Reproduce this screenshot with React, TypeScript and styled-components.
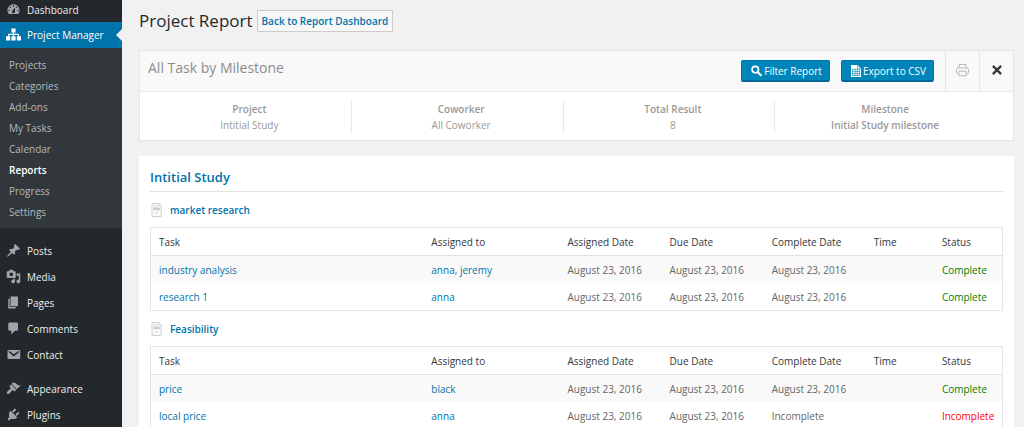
import React from "react";
import styled, { createGlobalStyle } from "styled-components";

const GlobalStyle = createGlobalStyle`
  *, *::before, *::after { box-sizing: border-box; }
  html { scrollbar-width: none; }
  body {
    margin: 0;
    background: #f1f1f1;
    color: #444;
    font: 10px/16px "Open Sans", "Noto Sans", sans-serif;
  }
  a { color: #0073aa; text-decoration: none; }
  h1, h2, h3, p, ul, dl, dd { margin: 0; padding: 0; }
  ul { list-style: none; }
  button { font: inherit; margin: 0; cursor: pointer; }
`;

const Page = styled.div`
  display: flex;
  min-height: 100vh;
`;

const Sidebar = styled.nav`
  flex: none;
  width: 122px;
  background: #23282d;
`;

const MenuLink = styled.a<{ $active?: boolean; $first?: boolean }>`
  display: flex;
  align-items: center;
  gap: 6px;
  height: ${(p) => (p.$first ? 22 : 26)}px;
  padding: 0 0 ${(p) => (p.$first ? 2 : 0)}px 6px;
  position: relative;
  color: ${(p) => (p.$active ? "#fff" : "#eee")};
  background: ${(p) => (p.$active ? "#0073aa" : "transparent")};

  svg {
    flex: none;
    margin-bottom: 2px;
    fill: ${(p) => (p.$active ? "#fff" : "#a0a5aa")};
  }

  &::after {
    content: "";
    display: ${(p) => (p.$active ? "block" : "none")};
    position: absolute;
    right: 0;
    top: 7px;
    border: 6px solid transparent;
    border-left-width: 0;
    border-right-color: #f1f1f1;
  }
`;

const MenuGroup = styled.ul<{ $top?: number }>`
  padding-top: ${(p) => p.$top ?? 0}px;
`;

const SubMenu = styled.ul`
  padding: 7px 0 5px;
  background: #32373c;
`;

const SubLink = styled.a<{ $current?: boolean }>`
  display: block;
  padding-left: 9px;
  line-height: 21px;
  color: ${(p) => (p.$current ? "#fff" : "#b4b9be")};
  font-weight: ${(p) => (p.$current ? 600 : 400)};
`;

const Main = styled.main`
  flex: 1;
  min-width: 0;
  padding: 10px 10px 0 17px;
`;

const TitleRow = styled.header`
  display: flex;
  align-items: center;
  gap: 4px;
  height: 22px;
  margin-bottom: 18px;
`;

const Title = styled.h1`
  font-size: 17px;
  font-weight: 400;
  line-height: 22px;
  color: #23282d;
`;

const BackButton = styled.button`
  height: 22px;
  padding: 0 4px;
  border: 1px solid #ccc;
  background: #f7f7f7;
  color: #0073aa;
  font-weight: 600;
`;

const Summary = styled.section`
  margin-bottom: 15px;
  border: 1px solid #e5e5e5;
  background: #fff;
`;

const SummaryHead = styled.div`
  display: flex;
  align-items: center;
  height: 41px;
  border-bottom: 1px solid #eaeaea;
  background: #f9f9f9;
`;

const SummaryTitle = styled.h2`
  flex: 1;
  padding: 0 0 6px 8px;
  font-size: 14px;
  font-weight: 400;
  line-height: 20px;
  color: #8c8c8c;
`;

const PrimaryButton = styled.button`
  display: flex;
  align-items: center;
  justify-content: center;
  gap: 2px;
  height: 22px;
  margin-right: 11px;
  padding: 0 7px 0 9px;
  border: 1px solid #0073aa;
  border-bottom: 2px solid #006799;
  border-radius: 2px;
  background: #0085ba;
  color: #fff;
`;

const IconButton = styled.button`
  display: flex;
  align-items: center;
  justify-content: center;
  align-self: stretch;
  width: 34px;
  padding: 0 0 2px;
  border: 0;
  border-left: 1px solid #e5e5e5;
  background: transparent;
`;

const Stats = styled.dl`
  display: grid;
  grid-template-columns: repeat(4, 1fr);
  column-gap: 8px;
  padding: 9px 26px 7px 8px;
  text-align: center;
  color: #999;
`;

const Stat = styled.div<{ $strong?: boolean }>`
  border-right: 1px solid #e8e8e8;
  &:last-child { border-right: 0; }

  dt { font-weight: 600; }
  dd { font-weight: ${(p) => (p.$strong ? 600 : 400)}; }
`;

const Card = styled.section`
  padding: 11px;
  background: #fff;
`;

const ProjectName = styled.h2`
  padding-bottom: 4px;
  border-bottom: 1px solid #e1e1e1;
  font-size: 13px;
  font-weight: 600;
  line-height: 20px;
  color: #0073aa;
`;

const ListTitle = styled.h3`
  display: flex;
  align-items: center;
  gap: 8px;
  height: 35px;
  padding-left: 1px;
  font-size: 10px;
  font-weight: 600;
`;

const TaskTable = styled.table`
  width: 100%;
  table-layout: fixed;
  border: 1px solid #e5e5e5;
  border-spacing: 0;

  th, td {
    height: 27px;
    padding: 0 0 0 8px;
    text-align: left;
    font-weight: 400;
    white-space: nowrap;
  }
  th {
    height: 28px;
    border-bottom: 1px solid #e1e1e1;
    color: #32373c;
  }
  td { color: #666; }
  tbody tr:nth-child(odd) { background: #f9f9f9; }
`;

const Col = styled.col<{ $width: number }>`
  width: ${(p) => p.$width}%;
`;

const Status = styled.td<{ $done: boolean }>`
  && { color: ${(p) => (p.$done ? "#008000" : "#f00")}; }
`;

const icons = {
  dashboard:
    "M3.76 16h12.48c1.1-1.37 1.76-3.11 1.76-5 0-4.42-3.58-8-8-8s-8 3.58-8 8c0 1.89.66 3.63 1.76 5zM10 4c.55 0 1 .45 1 1s-.45 1-1 1-1-.45-1-1 .45-1 1-1zM6 6c.55 0 1 .45 1 1s-.45 1-1 1-1-.45-1-1 .45-1 1-1zm8 0c.55 0 1 .45 1 1s-.45 1-1 1-1-.45-1-1 .45-1 1-1zm-5.37 5.55L12 7v6c0 1.1-.9 2-2 2s-2-.9-2-2c0-.57.24-1.08.63-1.45zM4 10c.55 0 1 .45 1 1s-.45 1-1 1-1-.45-1-1 .45-1 1-1zm12 0c.55 0 1 .45 1 1s-.45 1-1 1-1-.45-1-1 .45-1 1-1z",
  sitemap:
    "M7.2 2h5.6v5.4h-2v1.7h6.6v3.3H20V18h-5.6v-5.6h1.4v-1.8h-5v1.8h2V18H7.2v-5.6h2v-1.8h-5v1.8h1.4V18H0v-5.6h2.6V9.1h6.6V7.4h-2z",
  posts:
    "M10.44 3.02l1.82-1.82 6.36 6.35-1.83 1.82c-1.05-.68-2.48-.57-3.41.36l-.75.75c-.92.93-1.04 2.35-.35 3.41l-1.83 1.82-2.41-2.41-2.8 2.79c-.42.42-3.38 2.71-3.8 2.29s1.86-3.39 2.28-3.81l2.79-2.79L4.1 9.36l1.83-1.82c1.05.69 2.48.57 3.4-.36l.75-.75c.93-.92 1.05-2.35.36-3.41z",
  media:
    "M13 11V4c0-.55-.45-1-1-1h-1.67L9 1H5L3.67 3H2c-.55 0-1 .45-1 1v7c0 .55.45 1 1 1h10c.55 0 1-.45 1-1zM7 4.5c1.38 0 2.5 1.12 2.5 2.5S8.38 9.5 7 9.5 4.5 8.38 4.5 7 5.62 4.5 7 4.5zM14 6h5v10.5c0 1.38-1.12 2.5-2.5 2.5S14 17.88 14 16.5s1.12-2.5 2.5-2.5c.17 0 .34.02.5.05V9h-3V6zm-4 8.05V13h2v3.5c0 1.38-1.12 2.5-2.5 2.5S7 17.88 7 16.5 8.12 14 9.5 14c.17 0 .34.02.5.05z",
  pages: "M6 15V2h10v13H6zm-1 1h8v2H3V5h2v11z",
  comments:
    "M5 2h9c1.1 0 2 .9 2 2v7c0 1.1-.9 2-2 2h-2l-5 5v-5H5c-1.1 0-2-.9-2-2V4c0-1.1.9-2 2-2z",
  contact:
    "M3.87 4h13.25C18.37 4 19 4.59 19 5.79v8.42c0 1.19-.63 1.79-1.88 1.79H3.87c-1.25 0-1.88-.6-1.88-1.79V5.79c0-1.2.63-1.79 1.88-1.79zm6.62 8.6l6.74-5.53c.24-.2.43-.66.13-1.07-.29-.41-.82-.42-1.17-.17l-5.7 3.86L4.8 5.83c-.35-.25-.88-.24-1.17.17-.3.41-.11.87.13 1.07z",
  appearance:
    "M14.48 11.06L7.41 3.99l1.5-1.5c.5-.56 2.3-.47 3.51.32 1.21.8 1.43 1.28 2.91 2.1 1.18.64 2.45 1.26 4.45.85zm-.71.71L6.7 4.7 4.93 6.47c-.39.39-.39 1.02 0 1.41l1.06 1.06c.39.39.39 1.03 0 1.42-.6.6-1.43 1.11-2.21 1.69-.35.26-.7.53-1.01.84C1.43 14.23.4 16.08 1.4 17.07c.99 1 2.84-.03 4.18-1.36.31-.31.58-.66.85-1.02.57-.78 1.08-1.61 1.69-2.21.39-.39 1.02-.39 1.41 0l1.06 1.06c.39.39 1.02.39 1.41 0z",
  plugins:
    "M13.11 4.36L9.87 7.6 8 5.73l3.24-3.24c.35-.34 1.05-.2 1.56.32.52.51.66 1.21.31 1.55zm-8 1.77l.91-1.12 9.01 9.01-1.19.84c-.71.71-2.63 1.16-3.82 1.16H6.14L4.9 17.26c-.59.59-1.54.59-2.12 0-.59-.58-.59-1.53 0-2.12l1.24-1.24v-3.88c0-1.13.4-3.19 1.09-3.89zm7.26 3.97l3.24-3.24c.34-.35 1.04-.21 1.55.31.52.51.66 1.21.31 1.55l-3.24 3.25z",
};

type IconName = keyof typeof icons;

const MenuIcon = ({ name }: { name: IconName }) => (
  <svg width="15" height="15" viewBox="0 0 20 20" aria-hidden="true">
    <path d={icons[name]} />
  </svg>
);

const SearchIcon = () => (
  <svg width="11" height="12" viewBox="0 0 11 12" fill="none" stroke="#fff" aria-hidden="true">
    <circle cx="4.3" cy="4.6" r="3.2" strokeWidth="1.7" />
    <path d="M6.8 7.2L9.8 10.3" strokeWidth="2.2" strokeLinecap="round" />
  </svg>
);

const SheetIcon = () => (
  <svg width="10" height="12" viewBox="0 0 10 12" aria-hidden="true">
    <path d="M0 0h6.6L10 3.2V12H0z" fill="#fff" />
    <path d="M6.6 0v3.2H10M1.4 4.2h7.2M1.4 6.4h7.2M1.4 8.6h7.2M1.4 10.6h7.2M1.6 4v7M4 4v7M6.3 4v7M8.5 4v7" fill="none" stroke="#0085ba" strokeWidth=".6" />
  </svg>
);

const PrintIcon = () => (
  <svg width="13" height="14" viewBox="0 0 13 14" fill="none" stroke="#b4b9be" aria-hidden="true">
    <path d="M3 5V1.5h7V5M2.5 10.5h-1a1 1 0 0 1-1-1v-3a1.6 1.6 0 0 1 1.6-1.5h8.8a1.6 1.6 0 0 1 1.6 1.5v3a1 1 0 0 1-1 1h-1M2.8 8.2h7.4v4.6H2.8z" />
  </svg>
);

const CloseIcon = () => (
  <svg width="10" height="10" viewBox="0 0 10 10" fill="none" stroke="#32373c" strokeWidth="2.3" aria-hidden="true">
    <path d="M.9 .9l8.2 8.2M9.1 .9L.9 9.1" />
  </svg>
);

const ListIcon = () => (
  <svg width="11" height="14" viewBox="0 0 11 14" fill="none" stroke="#ccc" strokeWidth=".9" aria-hidden="true">
    <path d="M1 .5h6.8l2.4 2.4v10.6H1zM7.8 .5v2.4h2.4" fill="#fafafa" />
    <path d="M2.6 3h3.5" />
    <path d="M2.4 4.6h6.4v2.6H2.4z" fill="#ccc" stroke="none" />
    <path d="M4.4 9.6l1 1 1.4-1.6" />
  </svg>
);

const contentMenu: [IconName, string][] = [
  ["posts", "Posts"],
  ["media", "Media"],
  ["pages", "Pages"],
  ["comments", "Comments"],
  ["contact", "Contact"],
];

const siteMenu: [IconName, string][] = [
  ["appearance", "Appearance"],
  ["plugins", "Plugins"],
];

const subItems = [
  "Projects",
  "Categories",
  "Add-ons",
  "My Tasks",
  "Calendar",
  "Reports",
  "Progress",
  "Settings",
];

const stats = [
  { label: "Project", value: "Intitial Study" },
  { label: "Coworker", value: "All Coworker" },
  { label: "Total Result", value: "8" },
  { label: "Milestone", value: "Initial Study milestone", strong: true },
];

const columns: [string, number][] = [
  ["Task", 32],
  ["Assigned to", 16],
  ["Assigned Date", 12],
  ["Due Date", 12],
  ["Complete Date", 12],
  ["Time", 8],
  ["Status", 8],
];

const date = "August 23, 2016";

const lists = [
  {
    name: "market research",
    tasks: [
      { name: "industry analysis", people: ["anna", "jeremy"], done: true },
      { name: "research 1", people: ["anna"], done: true },
    ],
  },
  {
    name: "Feasibility",
    tasks: [
      { name: "price", people: ["black"], done: true },
      { name: "local price", people: ["anna"], done: false },
    ],
  },
];

const MenuSection = ({ items, top }: { items: [IconName, string][]; top: number }) => (
  <MenuGroup $top={top}>
    {items.map(([icon, label]) => (
      <li key={label}>
        <MenuLink href="#">
          <MenuIcon name={icon} />
          {label}
        </MenuLink>
      </li>
    ))}
  </MenuGroup>
);

export default function App() {
  return (
    <>
      <GlobalStyle />
      <Page>
        <Sidebar>
          <MenuGroup>
            <li>
              <MenuLink href="#" $first>
                <MenuIcon name="dashboard" />
                Dashboard
              </MenuLink>
            </li>
            <li>
              <MenuLink href="#" $active>
                <MenuIcon name="sitemap" />
                Project Manager
              </MenuLink>
              <SubMenu>
                {subItems.map((item) => (
                  <li key={item}>
                    <SubLink href="#" $current={item === "Reports"}>
                      {item}
                    </SubLink>
                  </li>
                ))}
              </SubMenu>
            </li>
          </MenuGroup>
          <MenuSection items={contentMenu} top={10} />
          <MenuSection items={siteMenu} top={8} />
        </Sidebar>

        <Main>
          <TitleRow>
            <Title>Project Report</Title>
            <BackButton>Back to Report Dashboard</BackButton>
          </TitleRow>

          <Summary>
            <SummaryHead>
              <SummaryTitle>All Task by Milestone</SummaryTitle>
              <PrimaryButton>
                <SearchIcon />
                Filter Report
              </PrimaryButton>
              <PrimaryButton>
                <SheetIcon />
                Export to CSV
              </PrimaryButton>
              <IconButton aria-label="Print">
                <PrintIcon />
              </IconButton>
              <IconButton aria-label="Close">
                <CloseIcon />
              </IconButton>
            </SummaryHead>
            <Stats>
              {stats.map((s) => (
                <Stat key={s.label} $strong={s.strong}>
                  <dt>{s.label}</dt>
                  <dd>{s.value}</dd>
                </Stat>
              ))}
            </Stats>
          </Summary>

          <Card>
            <ProjectName>Intitial Study</ProjectName>
            {lists.map((list) => (
              <section key={list.name}>
                <ListTitle>
                  <ListIcon />
                  <a href="#">{list.name}</a>
                </ListTitle>
                <TaskTable>
                  <colgroup>
                    {columns.map(([label, width]) => (
                      <Col key={label} $width={width} />
                    ))}
                  </colgroup>
                  <thead>
                    <tr>
                      {columns.map(([label]) => (
                        <th key={label} scope="col">
                          {label}
                        </th>
                      ))}
                    </tr>
                  </thead>
                  <tbody>
                    {list.tasks.map((task) => (
                      <tr key={task.name}>
                        <td>
                          <a href="#">{task.name}</a>
                        </td>
                        <td>
                          {task.people.map((person, i) => (
                            <React.Fragment key={person}>
                              {i > 0 && ", "}
                              <a href="#">{person}</a>
                            </React.Fragment>
                          ))}
                        </td>
                        <td>{date}</td>
                        <td>{date}</td>
                        <td>{task.done ? date : "Incomplete"}</td>
                        <td />
                        <Status $done={task.done}>
                          {task.done ? "Complete" : "Incomplete"}
                        </Status>
                      </tr>
                    ))}
                  </tbody>
                </TaskTable>
              </section>
            ))}
          </Card>
        </Main>
      </Page>
    </>
  );
}
